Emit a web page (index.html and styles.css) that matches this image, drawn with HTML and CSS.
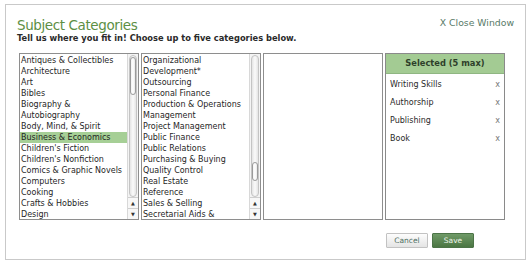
FILE: index.html
```html
<!DOCTYPE html>
<html>
<head>
<meta charset="utf-8">
<link rel="stylesheet" href="styles.css">
</head>
<body>
<div class="modal">
  <div class="head">
    <div class="titles">
      <h1 class="title">Subject Categories</h1>
      <p class="sub">Tell us where you fit in! Choose up to five categories below.</p>
    </div>
    <a class="close">X Close Window</a>
  </div>
  <div class="lists">
    <div class="box">
      <ul class="items">
        <li>Antiques &amp; Collectibles</li>
        <li>Architecture</li>
        <li>Art</li>
        <li>Bibles</li>
        <li>Biography &amp;<br>Autobiography</li>
        <li>Body, Mind, &amp; Spirit</li>
        <li class="sel">Business &amp; Economics</li>
        <li>Children's Fiction</li>
        <li>Children's Nonfiction</li>
        <li>Comics &amp; Graphic Novels</li>
        <li>Computers</li>
        <li>Cooking</li>
        <li>Crafts &amp; Hobbies</li>
        <li>Design</li>
      </ul>
      <div class="sb">
        <div class="track"><div class="thumb thumb-top"></div></div>
        <div class="arrow">&#9650;</div>
        <div class="arrow">&#9660;</div>
      </div>
    </div>
    <div class="box">
      <ul class="items">
        <li>Organizational<br>Development*</li>
        <li>Outsourcing</li>
        <li>Personal Finance</li>
        <li>Production &amp; Operations<br>Management</li>
        <li>Project Management</li>
        <li>Public Finance</li>
        <li>Public Relations</li>
        <li>Purchasing &amp; Buying</li>
        <li>Quality Control</li>
        <li>Real Estate</li>
        <li>Reference</li>
        <li>Sales &amp; Selling</li>
        <li>Secretarial Aids &amp;</li>
      </ul>
      <div class="sb">
        <div class="track"><div class="thumb thumb-low"></div></div>
        <div class="arrow">&#9650;</div>
        <div class="arrow">&#9660;</div>
      </div>
    </div>
    <div class="box empty"></div>
    <div class="box selected">
      <div class="sel-head">Selected (5 max)</div>
      <ul class="chosen">
        <li><span>Writing Skills</span><span class="x">x</span></li>
        <li><span>Authorship</span><span class="x">x</span></li>
        <li><span>Publishing</span><span class="x">x</span></li>
        <li><span>Book</span><span class="x">x</span></li>
      </ul>
    </div>
  </div>
  <div class="actions">
    <button class="btn cancel">Cancel</button>
    <button class="btn save">Save</button>
  </div>
</div>
</body>
</html>
```
FILE: styles.css
```css
html, body {
  margin: 0;
  padding: 0;
  background: #ffffff;
}
body {
  font-family: "DejaVu Sans", Verdana, sans-serif;
  color: #222;
}
.modal {
  box-sizing: border-box;
  margin: 4px 0 0 5px;
  width: 521px;
  height: 256px;
  border: 1px solid #c9c9c9;
  background: #fff;
  padding: 0 0 0 13px;
  display: flex;
  flex-direction: column;
}
.head {
  display: flex;
  justify-content: space-between;
  align-items: flex-start;
  padding-top: 13px;
  padding-right: 11px;
  margin-left: -2px;
}
.title {
  margin: 0;
  font-weight: normal;
  font-size: 13.5px;
  line-height: 15px;
  color: #5d8f45;
  letter-spacing: -0.4px;
}
.sub {
  margin: 0;
  font-weight: bold;
  font-size: 8.3px;
  line-height: 10px;
  color: #2a2a2a;
}
.close {
  font-size: 9.3px;
  line-height: 10px;
  color: #587a68;
  margin-top: 0;
}
.lists {
  display: flex;
  gap: 2px;
  margin-top: 10px;
}
.box {
  box-sizing: border-box;
  width: 120px;
  height: 167px;
  border: 1px solid #8e8e8e;
  display: flex;
  background: #fff;
}
.items {
  list-style: none;
  margin: 0;
  padding: 1px 0 0 0;
  flex: 1;
  font-size: 8px;
  line-height: 11px;
  color: #1f1f1f;
  overflow: hidden;
  white-space: nowrap;
}
.items li {
  padding-left: 1px;
}
.items li.sel {
  background: #a6cf96;
}
.sb {
  width: 10px;
  border-left: 1px solid #d8d8d8;
  display: flex;
  flex-direction: column;
  background: #f4f4f4;
}
.track {
  flex: 1;
  margin: 1px 1px 0 1px;
  border: 1px solid #c4c4c4;
  border-radius: 4px;
  background: linear-gradient(to right, #e4e4e4, #fafafa 50%, #e4e4e4);
  position: relative;
}
.thumb {
  position: absolute;
  left: 0;
  right: 0;
  border: 1px solid #9a9a9a;
  border-radius: 4px;
  background: linear-gradient(to right, #f2f2f2, #ffffff 50%, #e8e8e8);
}
.thumb-top {
  top: 1px;
  height: 36px;
}
.thumb-low {
  top: 106px;
  height: 17px;
}
.arrow {
  height: 10px;
  font-size: 5px;
  line-height: 10px;
  text-align: center;
  color: #333;
  border-top: 1px solid #cfcfcf;
  background: #f7f7f7;
}
.selected {
  flex-direction: column;
  border-color: #8a8a8a;
}
.sel-head {
  height: 19px;
  background: #a3cb93;
  border-bottom: 1px solid #8fb682;
  font-weight: bold;
  font-size: 8.3px;
  line-height: 19px;
  text-align: center;
  color: #2e3f2a;
}
.chosen {
  list-style: none;
  margin: 0;
  padding: 2px 0 0 0;
  font-size: 8px;
  color: #2a2a2a;
}
.chosen li {
  display: flex;
  justify-content: space-between;
  height: 18px;
  line-height: 18px;
  padding: 0 4px 0 4px;
}
.chosen .x {
  color: #777;
}
.actions {
  display: flex;
  gap: 4px;
  margin-top: 13px;
  padding-left: 367px;
}
.btn {
  box-sizing: border-box;
  width: 42px;
  height: 15px;
  padding: 0;
  font-family: "DejaVu Sans", sans-serif;
  font-size: 7.5px;
  line-height: 13px;
  border-radius: 1px;
}
.cancel {
  border: 1px solid #c2c2c2;
  background: linear-gradient(#fdfdfd, #e4e4e4);
  color: #4f6f63;
}
.save {
  border: 1px solid #4c7447;
  background: linear-gradient(#6f9a67, #4b7643);
  color: #eef5ea;
}
```
